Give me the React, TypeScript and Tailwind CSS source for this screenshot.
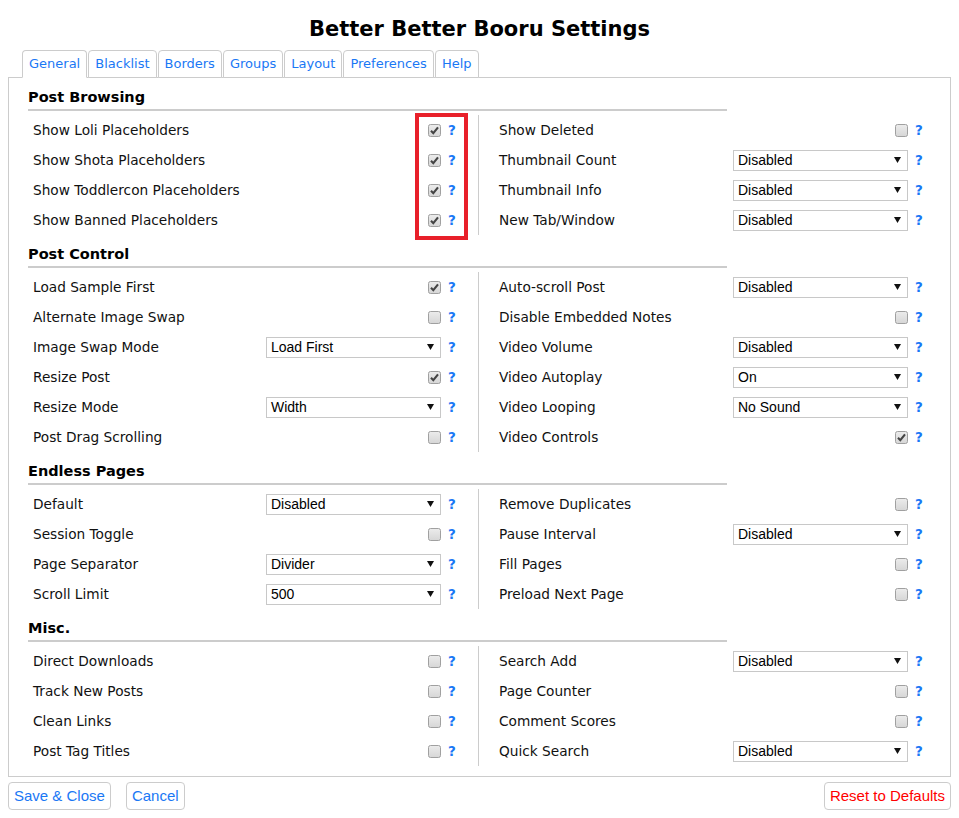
import React from 'react'

type Item = { label: string; kind: 'check' | 'select'; on?: boolean; value?: string }

const c = (label: string, on = false): Item => ({ label, kind: 'check', on })
const s = (label: string, value: string): Item => ({ label, kind: 'select', value })

const sections: { title: string; left: Item[]; right: Item[]; marked?: boolean }[] = [
  {
    title: 'Post Browsing',
    marked: true,
    left: [
      c('Show Loli Placeholders', true),
      c('Show Shota Placeholders', true),
      c('Show Toddlercon Placeholders', true),
      c('Show Banned Placeholders', true),
    ],
    right: [
      c('Show Deleted'),
      s('Thumbnail Count', 'Disabled'),
      s('Thumbnail Info', 'Disabled'),
      s('New Tab/Window', 'Disabled'),
    ],
  },
  {
    title: 'Post Control',
    left: [
      c('Load Sample First', true),
      c('Alternate Image Swap'),
      s('Image Swap Mode', 'Load First'),
      c('Resize Post', true),
      s('Resize Mode', 'Width'),
      c('Post Drag Scrolling'),
    ],
    right: [
      s('Auto-scroll Post', 'Disabled'),
      c('Disable Embedded Notes'),
      s('Video Volume', 'Disabled'),
      s('Video Autoplay', 'On'),
      s('Video Looping', 'No Sound'),
      c('Video Controls', true),
    ],
  },
  {
    title: 'Endless Pages',
    left: [
      s('Default', 'Disabled'),
      c('Session Toggle'),
      s('Page Separator', 'Divider'),
      s('Scroll Limit', '500'),
    ],
    right: [
      c('Remove Duplicates'),
      s('Pause Interval', 'Disabled'),
      c('Fill Pages'),
      c('Preload Next Page'),
    ],
  },
  {
    title: 'Misc.',
    left: [
      c('Direct Downloads'),
      c('Track New Posts'),
      c('Clean Links'),
      c('Post Tag Titles'),
    ],
    right: [
      s('Search Add', 'Disabled'),
      c('Page Counter'),
      c('Comment Scores'),
      s('Quick Search', 'Disabled'),
    ],
  },
]

const tabs = ['General', 'Blacklist', 'Borders', 'Groups', 'Layout', 'Preferences', 'Help']

function CheckBox({ on }: { on?: boolean }) {
  return (
    <svg width="13" height="13" viewBox="0 0 13 13" className="block">
      <defs>
        <linearGradient id="cbg" x1="0" y1="0" x2="0" y2="1">
          <stop offset="0" stopColor="#ececec" />
          <stop offset="1" stopColor="#d6d6d6" />
        </linearGradient>
      </defs>
      <rect x="0.5" y="0.5" width="12" height="12" rx="2" fill="url(#cbg)" stroke="#a0a0a0" />
      {on && <path d="M3 6.8 L5.3 9.2 L10 3.4" fill="none" stroke="#444" strokeWidth="2.1" />}
    </svg>
  )
}

function Select({ value }: { value?: string }) {
  return (
    <div className="w-[175px] h-[21px] border border-[#c8c8c8] bg-white flex items-center justify-between pl-[4px] pr-[6px] text-[14px] text-black font-['Liberation_Sans',Arial,sans-serif]">
      <span>{value}</span>
      <svg width="7" height="6" viewBox="0 0 7 6">
        <path d="M0 0 L7 0 L3.5 6 Z" fill="#111" />
      </svg>
    </div>
  )
}

function Row({ item, left }: { item: Item; left: boolean }) {
  return (
    <div className={`h-[30px] flex items-center ${left ? 'pl-[5px] pr-[21px]' : 'pl-[20px] pr-[5px]'}`}>
      <span className="flex-1 text-[13.7px] text-[#111]">{item.label}</span>
      {item.kind === 'check' ? <CheckBox on={item.on} /> : <Select value={item.value} />}
      <span className="ml-[7px] w-[9px] text-[13.5px] font-bold text-[#1a78f5]">?</span>
    </div>
  )
}

export default function App() {
  return (
    <div className="min-h-screen bg-white px-[8px] font-['DejaVu_Sans',Verdana,sans-serif]">
      <h1 className="pt-[15px] h-[50px] text-center text-[21px] font-bold text-black leading-[28px]">
        Better Better Booru Settings
      </h1>

      <div className="flex pl-[14px] relative z-10 -mb-px">
        {tabs.map((t, i) => (
          <div
            key={t}
            className={`h-[28px] px-[6px] mr-px flex items-center text-[13px] text-[#1a78f5] bg-white border border-[#ccc] rounded-t-[4px] ${
              i === 0 ? 'border-b-white' : ''
            }`}
          >
            {t}
          </div>
        ))}
      </div>

      <div className="border border-[#ccc] px-[19px] pb-[10px]">
        {sections.map((sec) => (
          <div key={sec.title}>
            <div className="w-[699px] pt-[9px] pb-[2px] leading-[20px] border-b-2 border-[#ccc] mb-[4px] text-[14.5px] font-bold text-black">
              {sec.title}
            </div>
            <div className="flex relative">
              <div className="w-[451px] border-r border-[#ccc]">
                {sec.left.map((it) => (
                  <Row key={it.label} item={it} left />
                ))}
              </div>
              <div className="w-[450px]">
                {sec.right.map((it) => (
                  <Row key={it.label} item={it} left={false} />
                ))}
              </div>
              {sec.marked && (
                <div className="absolute left-[387px] top-[-2px] w-[53px] h-[127px] border-4 border-[#e8202a]" />
              )}
            </div>
          </div>
        ))}
      </div>

      <div className="flex justify-between mt-[5px] font-['Liberation_Sans',Arial,sans-serif] text-[15px]">
        <div className="flex gap-[15px]">
          <button className="h-[28px] px-[5px] border border-[#ccc] rounded-[4px] bg-white text-[#1a78f5]">Save &amp; Close</button>
          <button className="h-[28px] px-[5px] border border-[#ccc] rounded-[4px] bg-white text-[#1a78f5]">Cancel</button>
        </div>
        <button className="h-[28px] px-[5px] border border-[#ccc] rounded-[4px] bg-white text-[#f00]">Reset to Defaults</button>
      </div>
    </div>
  )
}
